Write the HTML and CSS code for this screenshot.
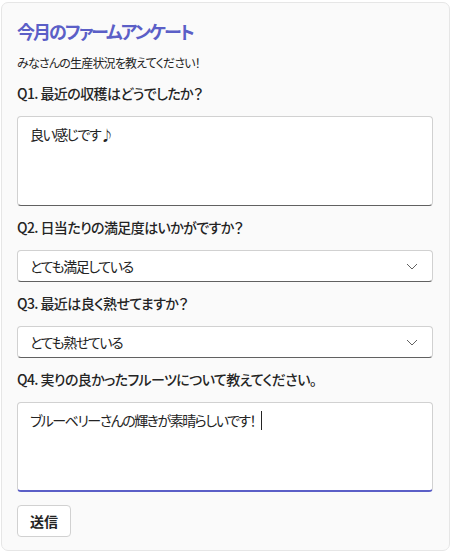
FILE: index.html
```html
<!DOCTYPE html>
<html lang="ja">
<head>
    <meta charset="UTF-8">
    <meta name="viewport" content="width=device-width, initial-scale=1.0">
    <title>今月のファームアンケート</title>
    <link rel="stylesheet" href="styles.css">
</head>
<body>
    <div class="survey-card">
        <h2 class="survey-title">今月のファームアンケート</h2>
        <p class="survey-lead">みなさんの生産状況を教えてください！</p>

        <div class="question first">
            <label class="question-label">Q1. 最近の収穫はどうでしたか？</label>
            <div class="text-box">良い感じです♪</div>
        </div>

        <div class="question">
            <label class="question-label">Q2. 日当たりの満足度はいかがですか？</label>
            <div class="select-box">
                <span>とても満足している</span>
                <svg class="chevron" width="12" height="12" viewBox="0 0 12 12"><path d="M1 4 L6 9 L11 4" fill="none" stroke="#616161" stroke-width="1"/></svg>
            </div>
        </div>

        <div class="question">
            <label class="question-label">Q3. 最近は良く熟せてますか？</label>
            <div class="select-box">
                <span>とても熟せている</span>
                <svg class="chevron" width="12" height="12" viewBox="0 0 12 12"><path d="M1 4 L6 9 L11 4" fill="none" stroke="#616161" stroke-width="1"/></svg>
            </div>
        </div>

        <div class="question">
            <label class="question-label">Q4. 実りの良かったフルーツについて教えてください。</label>
            <div class="text-box focused">ブルーベリーさんの輝きが素晴らしいです！<span class="caret"></span></div>
        </div>

        <button class="submit-btn">送信</button>
    </div>
</body>
</html>
```

FILE: styles.css
```css
body {
    margin: 0;
    padding: 2px 4px 0 1px;
    background-color: #fff;
    font-family: "Noto Sans CJK JP", "Noto Sans", sans-serif;
    font-feature-settings: "palt";
    color: #242424;
}

.survey-card {
    width: 416px;
    height: 515px;
    padding: 16px 16px 16px 15px;
    border: 1px solid #e6e6e6;
    border-radius: 7px;
    background-color: #fafafa;
}

.survey-title {
    margin: 0;
    font-size: 18px;
    line-height: 24px;
    font-weight: 600;
    letter-spacing: -2px;
    color: #5b5fc7;
}

.survey-lead {
    margin: 12px 0 0;
    font-size: 12px;
    line-height: 16px;
    letter-spacing: -0.8px;
}

.question {
    margin-top: 11px;
}

.question.first {
    margin-top: 12px;
}

.question-label {
    display: block;
    font-size: 14px;
    line-height: 20px;
    font-weight: 500;
    letter-spacing: -0.6px;
    margin-bottom: 13px;
}

.text-box {
    box-sizing: border-box;
    height: 90px;
    padding: 7px 12px;
    font-size: 14px;
    line-height: 20px;
    letter-spacing: -1.5px;
    background-color: #fff;
    border: 1px solid #d1d1d1;
    border-bottom-color: #616161;
    border-radius: 4px;
}

.text-box.focused {
    border-bottom: 2px solid #5b5fc7;
}

.caret {
    display: inline-block;
    width: 1px;
    height: 19px;
    margin-left: 6px;
    vertical-align: -4px;
    background-color: #242424;
}

.select-box {
    box-sizing: border-box;
    height: 32px;
    display: flex;
    align-items: center;
    justify-content: space-between;
    padding: 0 14px 0 12px;
    font-size: 14px;
    letter-spacing: -1.4px;
    background-color: #fff;
    border: 1px solid #d1d1d1;
    border-bottom-color: #616161;
    border-radius: 4px;
}

.submit-btn {
    margin-top: 13px;
    height: 32px;
    padding: 0 12px;
    font-family: inherit;
    font-feature-settings: "palt";
    font-size: 14px;
    font-weight: 600;
    color: #242424;
    background-color: #fff;
    border: 1px solid #d1d1d1;
    border-radius: 4px;
}
```
